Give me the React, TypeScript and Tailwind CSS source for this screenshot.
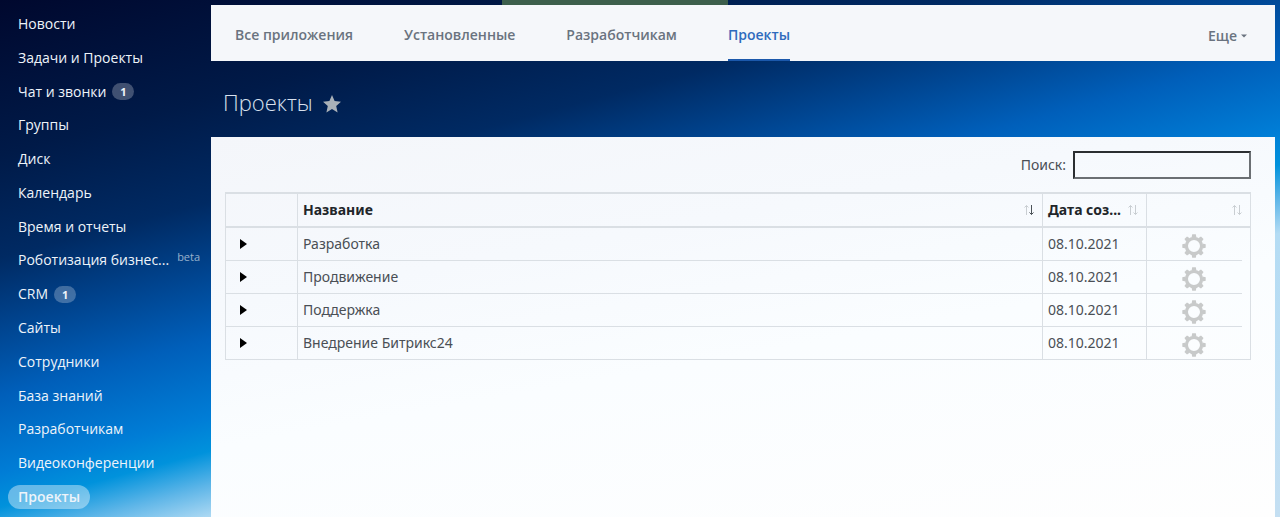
import React, { useState } from 'react';

interface MenuItem {
  title: string;
  counter?: number;
  beta?: boolean;
  active?: boolean;
}

const MENU: MenuItem[] = [
  { title: 'Новости' },
  { title: 'Задачи и Проекты' },
  { title: 'Чат и звонки', counter: 1 },
  { title: 'Группы' },
  { title: 'Диск' },
  { title: 'Календарь' },
  { title: 'Время и отчеты' },
  { title: 'Роботизация бизнес...', beta: true },
  { title: 'CRM', counter: 1 },
  { title: 'Сайты' },
  { title: 'Сотрудники' },
  { title: 'База знаний' },
  { title: 'Разработчикам' },
  { title: 'Видеоконференции' },
  { title: 'Проекты', active: true },
];

const TABS = ['Все приложения', 'Установленные', 'Разработчикам', 'Проекты'];

const PROJECTS = [
  { id: 1, name: 'Разработка', created: '08.10.2021' },
  { id: 2, name: 'Продвижение', created: '08.10.2021' },
  { id: 3, name: 'Поддержка', created: '08.10.2021' },
  { id: 4, name: 'Внедрение Битрикс24', created: '08.10.2021' },
];

const SortIcon: React.FC<{ sorted?: boolean }> = ({ sorted }) => (
  <svg width="10" height="12" viewBox="0 0 10 12" fill="none" className="shrink-0">
    <path d="M2.5 11V1.5M0.5 3.5L2.5 1.5L4.5 3.5" stroke="#c9ced2" />
    <path d="M7.5 1V10.5M5.5 8.5L7.5 10.5L9.5 8.5" stroke={sorted ? '#4b5257' : '#c9ced2'} />
  </svg>
);

const GearIcon = () => (
  <svg width="24" height="24" viewBox="0 0 24 24" fill="none">
    <circle cx="12" cy="12" r="7.6" stroke="#c8caca" strokeWidth="3.2" />
    {[0, 45, 90, 135, 180, 225, 270, 315].map(angle => (
      <path key={angle} d="M9.6 3.6L10.2 0.3H13.8L14.4 3.6Z" fill="#c8caca" transform={`rotate(${angle} 12 12)`} />
    ))}
  </svg>
);

const Sidebar = () => (
  <nav className="w-[211px] shrink-0 min-h-screen flex flex-col justify-between items-start pl-2 pt-3 pb-2">
    {MENU.map(item => (
      <a
        key={item.title}
        href="#"
        className={`h-6 flex items-center rounded-full px-[10px] text-sm whitespace-nowrap text-[#eef4fa] ${
          item.active ? 'bg-white/40 font-semibold' : 'font-medium'
        }`}
      >
        {item.title}
        {item.counter && (
          <span className="ml-[6px] w-[22px] h-[17px] rounded-full bg-white/25 text-[11px] leading-[17px] font-bold text-center">
            {item.counter}
          </span>
        )}
        {item.beta && <span className="ml-2 mb-2 text-[11px] font-normal text-white/60">beta</span>}
      </a>
    ))}
  </nav>
);

const App: React.FC = () => {
  const [search, setSearch] = useState('');
  const rows = PROJECTS.filter(p => p.name.toLowerCase().includes(search.toLowerCase()));

  return (
    <div className="min-h-screen flex font-['Open_Sans','Noto_Sans',sans-serif] bg-[linear-gradient(165deg,#00082e_0%,#001a48_18%,#002a63_30%,#00448f_38%,#005fba_46%,#007dd6_55%,#0092dc_59%,#5fb6e8_63%,#b4dcf4_67%,#c4dff2_100%)]">
      <Sidebar />

      <main className="flex-1 min-w-0 flex flex-col mr-[5px]">
        <div className="h-[5px] flex">
          <div className="ml-[291px] w-[226px] bg-[#3d5f4c]" />
        </div>

        <div className="h-14 flex items-stretch justify-between bg-[#f5f7fa] pl-6 pr-7 text-sm font-semibold text-[#6a737f]">
          <div className="flex gap-[51px]">
            {TABS.map(tab => (
              <a
                key={tab}
                href="#"
                className={`flex items-center pt-[6px] border-b-2 ${tab === 'Проекты' ? 'text-[#2f6bbd] border-[#1b58ab]' : 'border-transparent'}`}
              >
                {tab}
              </a>
            ))}
          </div>
          <button type="button" className="flex items-center gap-1 pt-[6px]">
            Еще
            <svg width="6" height="4" viewBox="0 0 6 4">
              <path d="M0 0.5H6L3 3.5Z" fill="#6a737f" />
            </svg>
          </button>
        </div>

        <div className="h-[76px] flex items-center gap-[10px] pl-3 pt-[6px]">
          <h1 className="text-[22px] leading-8 font-light text-[#d8e1ee]">Проекты</h1>
          <button type="button" aria-label="В избранное">
            <svg width="18" height="18" viewBox="0 0 18 18" className="mt-1">
              <path d="M9 0L11.6 6.1L18 6.7L13.2 11L14.6 17.5L9 14.1L3.4 17.5L4.8 11L0 6.7L6.4 6.1Z" fill="#a9b1b8" />
            </svg>
          </button>
        </div>

        <div className="flex-1 bg-[linear-gradient(170deg,#f4f6fa_0%,#f6f9fd_30%,#fafdff_55%,#fefefe_100%)] pl-[14px] pr-6 pt-[14px] font-['Noto_Sans','Open_Sans',sans-serif] text-sm text-[#4a4f55]">
          <div className="flex items-center justify-end gap-[7px] mb-[13px]">
            <label htmlFor="search">Поиск:</label>
            <input
              id="search"
              type="text"
              value={search}
              onChange={e => setSearch(e.target.value)}
              className="w-[178px] h-7 border-2 border-t-[#2b2e31] border-l-[#2b2e31] border-r-[#6b6f73] border-b-[#6b6f73] px-2 bg-transparent outline-none"
            />
          </div>

          <table className="w-full table-fixed border-separate border-spacing-0 border-l border-t-2 border-[#dadfe4]">
            <thead>
              <tr className="h-[34px] text-left text-[#212529]">
                <th className="w-[72px] border-r border-b-2 border-[#dadfe4]" />
                <th className="border-r border-b-2 border-[#dadfe4] pl-[5px] pr-2">
                  <div className="flex items-center justify-between">
                    Название <SortIcon sorted />
                  </div>
                </th>
                <th className="w-[104px] border-r border-b-2 border-[#dadfe4] pl-[5px] pr-2">
                  <div className="flex items-center justify-between">
                    Дата соз... <SortIcon />
                  </div>
                </th>
                <th className="w-[104px] border-r border-b-2 border-[#dadfe4] pr-2">
                  <div className="flex justify-end">
                    <SortIcon />
                  </div>
                </th>
              </tr>
            </thead>
            <tbody>
              {rows.map((project, i) => (
                <tr key={project.id} className="h-[33px]">
                  <td className="border-r border-b border-[#dadfe4] pl-[14px]">
                    <button type="button" aria-label="Развернуть" className="block">
                      <svg width="7" height="10" viewBox="0 0 7 10">
                        <path d="M0 0L7 5L0 10Z" fill="#000" />
                      </svg>
                    </button>
                  </td>
                  <td className="border-r border-b border-[#dadfe4] pl-[5px]">{project.name}</td>
                  <td className="border-r border-b border-[#dadfe4] pl-[5px]">{project.created}</td>
                  <td className="border-r border-[#dadfe4]">
                    <div
                      className={`h-[33px] flex items-center justify-center border-b border-[#dadfe4] pt-[3px] ${
                        i === rows.length - 1 ? 'pr-[10px]' : 'mr-2 pr-[2px]'
                      }`}
                    >
                      <button type="button" aria-label="Настройки">
                        <GearIcon />
                      </button>
                    </div>
                  </td>
                </tr>
              ))}
            </tbody>
          </table>
        </div>
      </main>
    </div>
  );
};

export default App;
